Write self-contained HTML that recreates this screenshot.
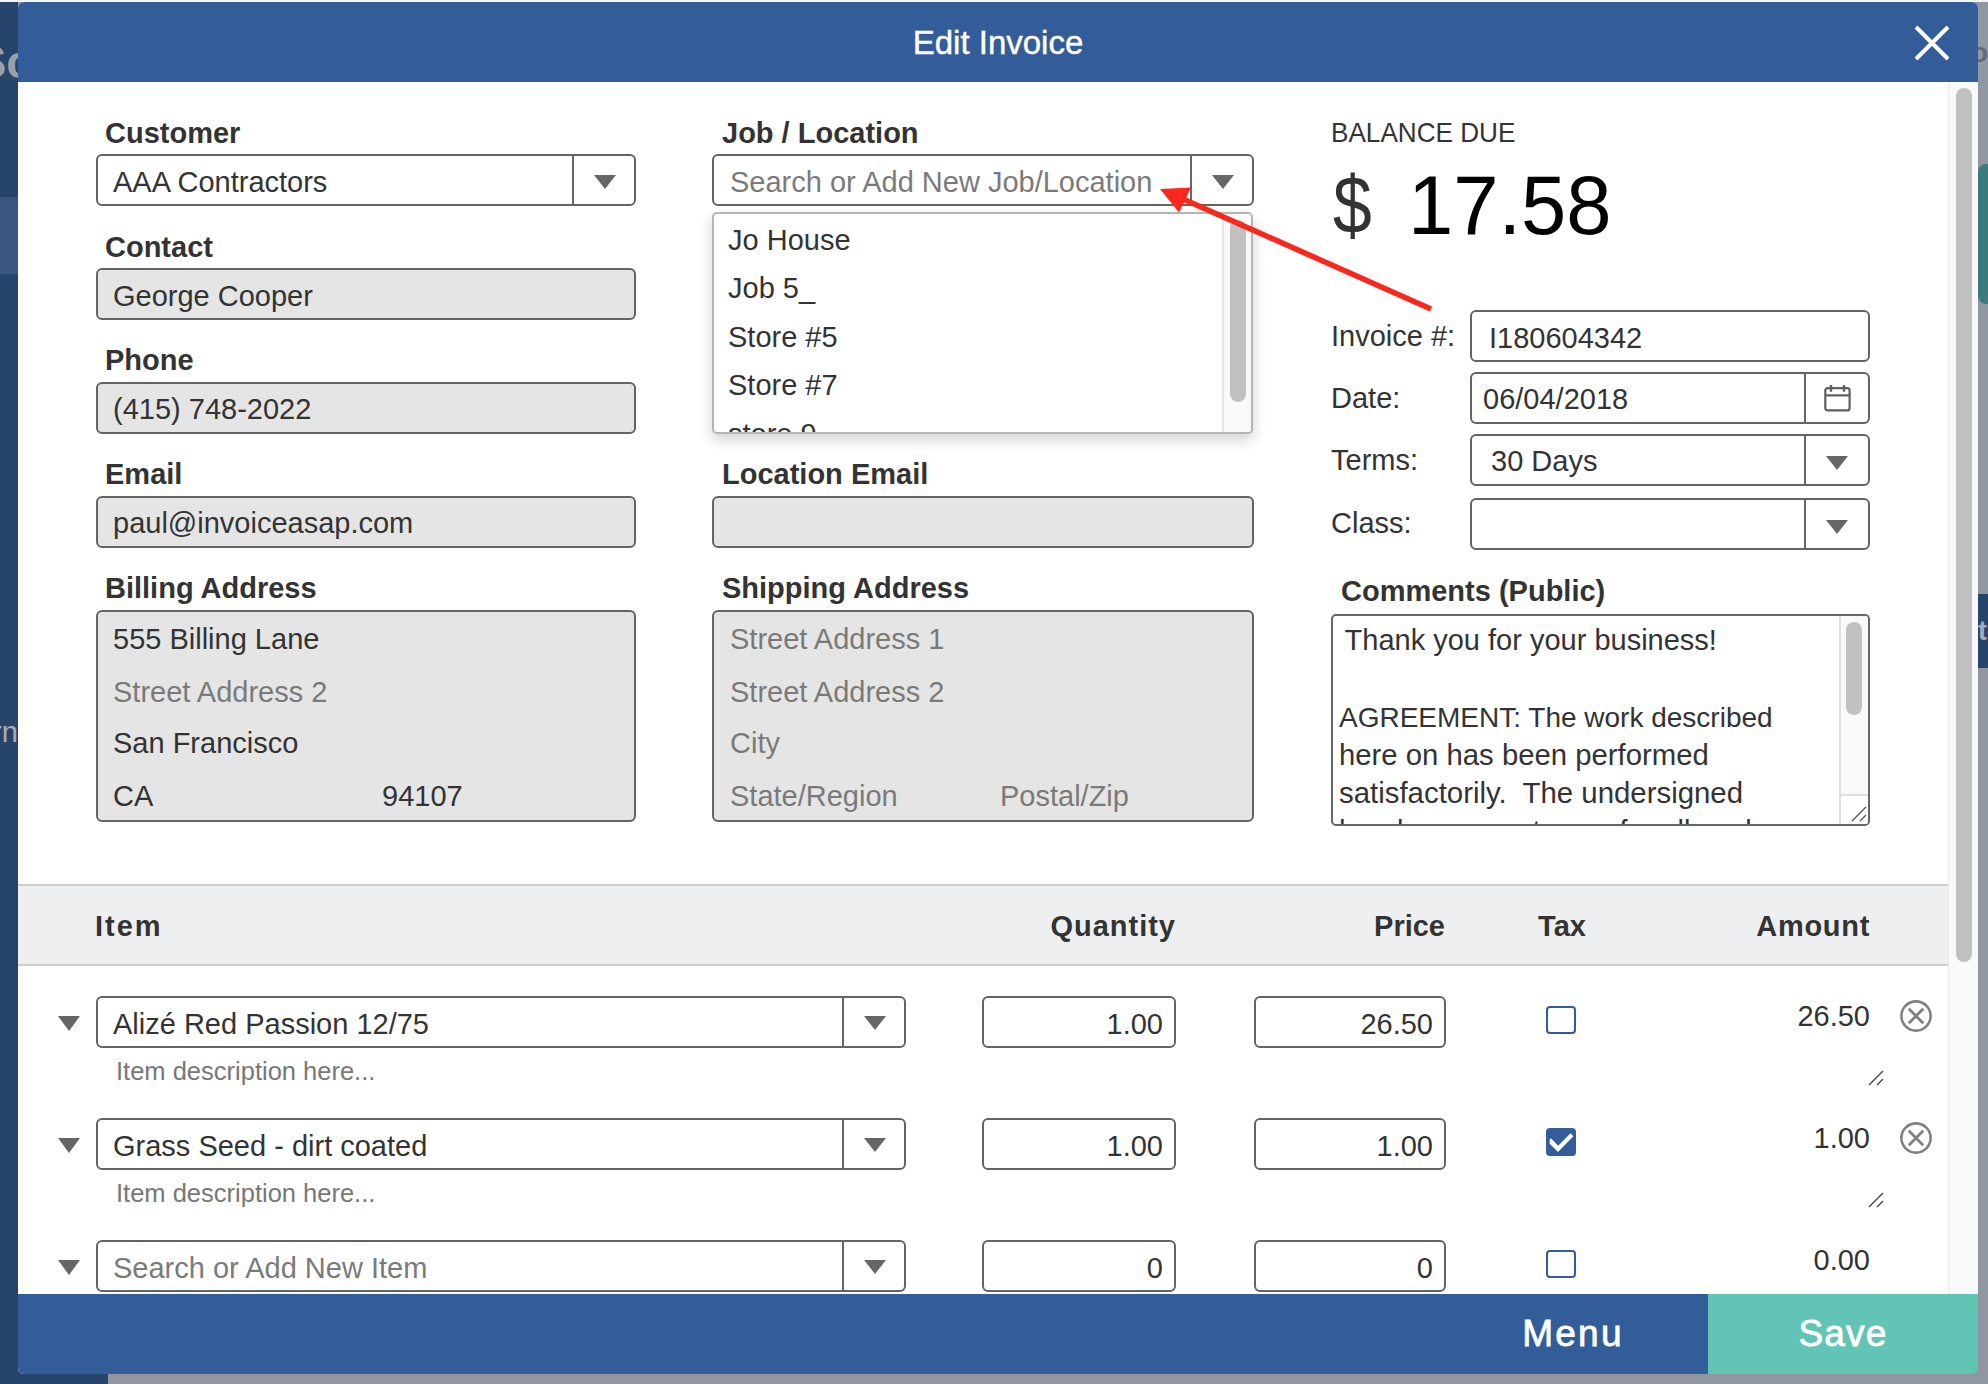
<!DOCTYPE html>
<html><head><meta charset="utf-8"><style>
html,body{margin:0;padding:0;width:1988px;height:1384px;overflow:hidden;position:relative;font-family:"Liberation Sans",sans-serif}
.t{position:absolute;white-space:pre;line-height:1}
.r{position:absolute}
</style></head><body>
<div class="r" style="left:0px;top:0px;width:1988px;height:1384px;background:#9097a0;"></div>
<div class="r" style="left:0px;top:0px;width:18px;height:1384px;background:#27446b;"></div>
<div class="r" style="left:0px;top:1370px;width:108px;height:14px;background:#27446b;"></div>
<div class="r" style="left:0px;top:197px;width:18px;height:77px;background:#3a5680;"></div>
<div class="r" style="left:0px;top:0px;width:1988px;height:2px;background:#f4f4f4;"></div>
<div class="t" style="top:38px;font-size:47px;color:#9aa0a8;font-weight:bold;left:-25px;">Sc</div>
<div class="t" style="top:718px;font-size:29px;color:#a9adb3;left:-8px;">rn</div>
<div class="r" style="left:1978px;top:164px;width:22px;height:140px;background:#3b7b7d;border-radius:8px;"></div>
<div class="r" style="left:1978px;top:594px;width:10px;height:74px;background:#27446b;"></div>
<div class="t" style="top:39px;font-size:28px;color:#666b73;font-weight:bold;left:1971px;">o</div>
<div class="t" style="top:618px;font-size:27px;color:#a9adb3;font-weight:bold;left:1978px;">te</div>
<div class="r" style="left:18px;top:2px;width:1960px;height:1372px;background:#fff;border-radius:6px;overflow:hidden">
<div class="r" style="left:0px;top:0px;width:1960px;height:80px;background:#335d99;"></div>
<div class="r" style="left:0px;top:1292px;width:1960px;height:80px;background:#335d99;"></div>
<div class="r" style="left:1690px;top:1292px;width:270px;height:80px;background:#61c4b4;"></div>
</div>
<div class="t" style="top:26px;font-size:33px;color:#fff;left:498px;width:1000px;text-align:center;-webkit-text-stroke:0.4px #fff;">Edit Invoice</div>
<svg class="r" style="left:1908px;top:19px" width="48" height="48" viewBox="0 0 48 48"><path d="M8 8 L40 40 M40 8 L8 40" stroke="#fff" stroke-width="4"/></svg>
<div class="r" style="left:1948px;top:82px;width:30px;height:1212px;background:#f9f9f9;border-left:1px solid #e6e6e6;box-sizing:border-box;"></div>
<div class="r" style="left:1956px;top:88px;width:16px;height:874px;background:#c1c1c1;border-radius:8px;"></div>
<div class="t" style="top:119px;font-size:29px;color:#333;font-weight:bold;left:105px;">Customer</div>
<div class="r" style="left:96px;top:154px;width:540px;height:52px;background:#fff;border:2px solid #646464;box-sizing:border-box;border-radius:6px;"></div>
<div class="r" style="left:572px;top:154px;width:2px;height:52px;background:#666;"></div>
<svg class="r" style="left:594.0px;top:175.0px" width="22" height="14" viewBox="0 0 22 14"><path d="M0 0 L22 0 L11.0 14 Z" fill="#666"/></svg>
<div class="t" style="top:168px;font-size:29px;color:#333;left:113px;">AAA Contractors</div>
<div class="t" style="top:233px;font-size:29px;color:#333;font-weight:bold;left:105px;">Contact</div>
<div class="r" style="left:96px;top:268px;width:540px;height:52px;background:#e5e5e5;border:2px solid #646464;box-sizing:border-box;border-radius:6px;"></div>
<div class="t" style="top:282px;font-size:29px;color:#333;left:113px;">George Cooper</div>
<div class="t" style="top:346px;font-size:29px;color:#333;font-weight:bold;left:105px;">Phone</div>
<div class="r" style="left:96px;top:382px;width:540px;height:52px;background:#e5e5e5;border:2px solid #646464;box-sizing:border-box;border-radius:6px;"></div>
<div class="t" style="top:395px;font-size:29px;color:#333;left:113px;">(415) 748-2022</div>
<div class="t" style="top:460px;font-size:29px;color:#333;font-weight:bold;left:105px;">Email</div>
<div class="r" style="left:96px;top:496px;width:540px;height:52px;background:#e5e5e5;border:2px solid #646464;box-sizing:border-box;border-radius:6px;"></div>
<div class="t" style="top:509px;font-size:29px;color:#333;left:113px;">paul@invoiceasap.com</div>
<div class="t" style="top:574px;font-size:29px;color:#333;font-weight:bold;left:105px;">Billing Address</div>
<div class="r" style="left:96px;top:610px;width:540px;height:212px;background:#e5e5e5;border:2px solid #646464;box-sizing:border-box;border-radius:6px;"></div>
<div class="t" style="top:625px;font-size:29px;color:#333;left:113px;">555 Billing Lane</div>
<div class="t" style="top:678px;font-size:29px;color:#7a7a7a;left:113px;">Street Address 2</div>
<div class="t" style="top:729px;font-size:29px;color:#333;left:113px;">San Francisco</div>
<div class="t" style="top:782px;font-size:29px;color:#333;left:113px;">CA</div>
<div class="t" style="top:782px;font-size:29px;color:#333;left:382px;">94107</div>
<div class="t" style="top:119px;font-size:29px;color:#333;font-weight:bold;left:722px;">Job / Location</div>
<div class="r" style="left:712px;top:154px;width:542px;height:52px;background:#fff;border:2px solid #646464;box-sizing:border-box;border-radius:6px;"></div>
<div class="r" style="left:1190px;top:154px;width:2px;height:52px;background:#666;"></div>
<svg class="r" style="left:1212.0px;top:175.0px" width="22" height="14" viewBox="0 0 22 14"><path d="M0 0 L22 0 L11.0 14 Z" fill="#666"/></svg>
<div class="t" style="top:168px;font-size:29px;color:#7a7a7a;left:730px;">Search or Add New Job/Location</div>
<div class="t" style="top:460px;font-size:29px;color:#333;font-weight:bold;left:722px;">Location Email</div>
<div class="r" style="left:712px;top:496px;width:542px;height:52px;background:#e5e5e5;border:2px solid #646464;box-sizing:border-box;border-radius:6px;"></div>
<div class="t" style="top:574px;font-size:29px;color:#333;font-weight:bold;left:722px;">Shipping Address</div>
<div class="r" style="left:712px;top:610px;width:542px;height:212px;background:#e5e5e5;border:2px solid #646464;box-sizing:border-box;border-radius:6px;"></div>
<div class="t" style="top:625px;font-size:29px;color:#7a7a7a;left:730px;">Street Address 1</div>
<div class="t" style="top:678px;font-size:29px;color:#7a7a7a;left:730px;">Street Address 2</div>
<div class="t" style="top:729px;font-size:29px;color:#7a7a7a;left:730px;">City</div>
<div class="t" style="top:782px;font-size:29px;color:#7a7a7a;left:730px;">State/Region</div>
<div class="t" style="top:782px;font-size:29px;color:#7a7a7a;left:1000px;">Postal/Zip</div>
<div class="r" style="left:712px;top:212px;width:541px;height:222px;background:#fff;border:2px solid #b5b5b5;box-sizing:border-box;border-radius:5px;box-shadow:0 6px 14px rgba(0,0,0,0.18);overflow:hidden">
<div class="t" style="left:14px;top:12px;font-size:29px;color:#333">Jo House</div>
<div class="t" style="left:14px;top:60px;font-size:29px;color:#333">Job 5_</div>
<div class="t" style="left:14px;top:109px;font-size:29px;color:#333">Store #5</div>
<div class="t" style="left:14px;top:157px;font-size:29px;color:#333">Store #7</div>
<div class="t" style="left:14px;top:206px;font-size:29px;color:#333">store 9</div>
<div class="t" style="left:14px;top:-36px;font-size:29px;color:#333">Jobs</div>
<div class="r" style="left:508px;top:0;width:31px;height:218px;background:#f9f9f9;border-left:2px solid #e6e6e6;box-sizing:border-box"></div>
<div class="r" style="left:516px;top:6px;width:16px;height:182px;background:#c1c1c1;border-radius:8px"></div>
</div>
<svg class="r" style="left:0;top:0;z-index:5" width="1988" height="1384" viewBox="0 0 1988 1384"><path d="M1431 309 L1183 199" stroke="#f9271c" stroke-width="5.5" stroke-linecap="butt"/><path d="M1160 189 L1191 187.5 L1179 212.5 Z" fill="#f9271c"/></svg>
<div class="t" style="top:119px;font-size:27.5px;color:#333;left:1331px;transform:scaleX(0.95);transform-origin:0 0;">BALANCE DUE</div>
<div class="t" style="top:164px;font-size:82px;color:#333;left:1333px;transform:scaleX(0.85);transform-origin:0 0;">$</div>
<div class="t" style="top:164px;font-size:83px;color:#000;left:1408px;transform:scaleX(0.98);transform-origin:0 0;">17.58</div>
<div class="t" style="top:322px;font-size:29px;color:#333;left:1331px;">Invoice #:</div>
<div class="t" style="top:384px;font-size:29px;color:#333;left:1331px;">Date:</div>
<div class="t" style="top:446px;font-size:29px;color:#333;left:1331px;">Terms:</div>
<div class="t" style="top:509px;font-size:29px;color:#333;left:1331px;">Class:</div>
<div class="r" style="left:1470px;top:310px;width:400px;height:52px;background:#fff;border:2px solid #646464;box-sizing:border-box;border-radius:6px;"></div>
<div class="t" style="top:324px;font-size:29px;color:#333;left:1489px;">I180604342</div>
<div class="r" style="left:1470px;top:372px;width:400px;height:52px;background:#fff;border:2px solid #646464;box-sizing:border-box;border-radius:6px;"></div>
<div class="r" style="left:1804px;top:372px;width:2px;height:52px;background:#666;"></div>
<div class="t" style="top:385px;font-size:29px;color:#333;left:1483px;">06/04/2018</div>
<svg class="r" style="left:1823px;top:384px" width="30" height="30" viewBox="0 0 30 30"><rect x="2.3" y="4.1" width="24.3" height="22.3" rx="2.5" fill="none" stroke="#606060" stroke-width="2.2"/><path d="M2 11.4 H27 M8 1 V7.7 M21 1 V7.7" stroke="#606060" stroke-width="2.4"/></svg>
<div class="r" style="left:1470px;top:434px;width:400px;height:52px;background:#fff;border:2px solid #646464;box-sizing:border-box;border-radius:6px;"></div>
<div class="r" style="left:1804px;top:434px;width:2px;height:52px;background:#666;"></div>
<svg class="r" style="left:1826.0px;top:456.0px" width="22" height="14" viewBox="0 0 22 14"><path d="M0 0 L22 0 L11.0 14 Z" fill="#666"/></svg>
<div class="t" style="top:447px;font-size:29px;color:#333;left:1491px;">30 Days</div>
<div class="r" style="left:1470px;top:498px;width:400px;height:52px;background:#fff;border:2px solid #646464;box-sizing:border-box;border-radius:6px;"></div>
<div class="r" style="left:1804px;top:498px;width:2px;height:52px;background:#666;"></div>
<svg class="r" style="left:1826.0px;top:520.0px" width="22" height="14" viewBox="0 0 22 14"><path d="M0 0 L22 0 L11.0 14 Z" fill="#666"/></svg>
<div class="t" style="top:577px;font-size:29px;color:#333;font-weight:bold;left:1341px;">Comments (Public)</div>
<div class="r" style="left:1331px;top:614px;width:539px;height:212px;background:#fff;border:2px solid #666;box-sizing:border-box;border-radius:5px;overflow:hidden">
<div class="t" style="left:4px;top:10px;font-size:29px;color:#333"> Thank you for your business!</div>
<div class="t" style="left:6px;top:88px;font-size:28px;color:#333">AGREEMENT: The work described</div>
<div class="t" style="left:6px;top:124px;font-size:29.3px;color:#333">here on has been performed</div>
<div class="t" style="left:6px;top:162px;font-size:29.4px;color:#333">satisfactorily.&nbsp; The undersigned</div>
<div class="t" style="left:6px;top:201px;font-size:29px;color:#333">hereby agrees to pay for all work</div>
<div class="r" style="left:506px;top:0;width:31px;height:208px;background:#f9f9f9;border-left:2px solid #e0e0e0;box-sizing:border-box"></div>
<div class="r" style="left:513px;top:6px;width:16px;height:93px;background:#c1c1c1;border-radius:8px"></div>
<div class="r" style="left:506px;top:178px;width:31px;height:30px;background:#fff;border-left:2px solid #e0e0e0;border-top:2px solid #e0e0e0;box-sizing:border-box"></div>
<svg class="r" style="left:517px;top:189px" width="18" height="18" viewBox="0 0 18 18"><path d="M2 16 L16 2 M10 16 L16 10" stroke="#555" stroke-width="1.4"/></svg>
</div>
<div class="r" style="left:18px;top:884px;width:1930px;height:82px;background:#eeeff1;border-top:2px solid #cfcfcf;border-bottom:2px solid #cfcfcf;box-sizing:border-box;"></div>
<div class="t" style="top:912px;font-size:29px;color:#333;font-weight:bold;left:95px;letter-spacing:2px;">Item</div>
<div class="t" style="top:912px;font-size:29px;color:#333;font-weight:bold;right:812px;text-align:right;letter-spacing:1px;">Quantity</div>
<div class="t" style="top:912px;font-size:29px;color:#333;font-weight:bold;right:543px;text-align:right;">Price</div>
<div class="t" style="top:912px;font-size:29px;color:#333;font-weight:bold;left:1062px;width:1000px;text-align:center;">Tax</div>
<div class="t" style="top:912px;font-size:29px;color:#333;font-weight:bold;right:118px;text-align:right;letter-spacing:0.7px;">Amount</div>
<svg class="r" style="left:58.0px;top:1015.5px" width="22" height="15" viewBox="0 0 22 15"><path d="M0 0 L22 0 L11.0 15 Z" fill="#666"/></svg>
<div class="r" style="left:96px;top:996px;width:810px;height:52px;background:#fff;border:2px solid #646464;box-sizing:border-box;border-radius:6px;"></div>
<div class="r" style="left:842px;top:996px;width:2px;height:52px;background:#666;"></div>
<svg class="r" style="left:864.0px;top:1016.0px" width="22" height="14" viewBox="0 0 22 14"><path d="M0 0 L22 0 L11.0 14 Z" fill="#666"/></svg>
<div class="t" style="top:1010px;font-size:29px;color:#333;left:113px;">Alizé Red Passion 12/75</div>
<div class="r" style="left:982px;top:996px;width:194px;height:52px;background:#fff;border:2px solid #646464;box-sizing:border-box;border-radius:6px;"></div>
<div class="t" style="top:1010px;font-size:29px;color:#333;right:825px;text-align:right;">1.00</div>
<div class="r" style="left:1254px;top:996px;width:192px;height:52px;background:#fff;border:2px solid #646464;box-sizing:border-box;border-radius:6px;"></div>
<div class="t" style="top:1010px;font-size:29px;color:#333;right:555px;text-align:right;">26.50</div>
<div class="r" style="left:1546px;top:1006px;width:30px;height:28px;background:#fff;border:2px solid #335d99;box-sizing:border-box;border-radius:4px;"></div>
<div class="t" style="top:1002px;font-size:29px;color:#333;right:118px;text-align:right;">26.50</div>
<svg class="r" style="left:1899px;top:999px" width="34" height="34" viewBox="0 0 34 34"><circle cx="17" cy="17" r="14.6" fill="none" stroke="#808080" stroke-width="2.6"/><path d="M9.8 9.8 L24.2 24.2 M24.2 9.8 L9.8 24.2" stroke="#808080" stroke-width="2.8"/></svg>
<div class="t" style="top:1059px;font-size:25.5px;color:#777;left:116px;">Item description here...</div>
<svg class="r" style="left:1868px;top:1070px" width="16" height="16" viewBox="0 0 16 16"><path d="M1 15 L15 1 M9 15 L15 9" stroke="#444" stroke-width="1.4"/></svg>
<svg class="r" style="left:58.0px;top:1137.5px" width="22" height="15" viewBox="0 0 22 15"><path d="M0 0 L22 0 L11.0 15 Z" fill="#666"/></svg>
<div class="r" style="left:96px;top:1118px;width:810px;height:52px;background:#fff;border:2px solid #646464;box-sizing:border-box;border-radius:6px;"></div>
<div class="r" style="left:842px;top:1118px;width:2px;height:52px;background:#666;"></div>
<svg class="r" style="left:864.0px;top:1138.0px" width="22" height="14" viewBox="0 0 22 14"><path d="M0 0 L22 0 L11.0 14 Z" fill="#666"/></svg>
<div class="t" style="top:1132px;font-size:29px;color:#333;left:113px;">Grass Seed - dirt coated</div>
<div class="r" style="left:982px;top:1118px;width:194px;height:52px;background:#fff;border:2px solid #646464;box-sizing:border-box;border-radius:6px;"></div>
<div class="t" style="top:1132px;font-size:29px;color:#333;right:825px;text-align:right;">1.00</div>
<div class="r" style="left:1254px;top:1118px;width:192px;height:52px;background:#fff;border:2px solid #646464;box-sizing:border-box;border-radius:6px;"></div>
<div class="t" style="top:1132px;font-size:29px;color:#333;right:555px;text-align:right;">1.00</div>
<svg class="r" style="left:1546px;top:1128px" width="30" height="28" viewBox="0 0 30 28"><rect x="0" y="0" width="30" height="28" rx="4" fill="#335d99"/><path d="M3.7 11.0 L5.2 10.6 L12.2 17.7 L24.5 5.3 L27.4 8.2 L12 24 L3.7 15.7 Z" fill="#fff"/></svg>
<div class="t" style="top:1124px;font-size:29px;color:#333;right:118px;text-align:right;">1.00</div>
<svg class="r" style="left:1899px;top:1121px" width="34" height="34" viewBox="0 0 34 34"><circle cx="17" cy="17" r="14.6" fill="none" stroke="#808080" stroke-width="2.6"/><path d="M9.8 9.8 L24.2 24.2 M24.2 9.8 L9.8 24.2" stroke="#808080" stroke-width="2.8"/></svg>
<div class="t" style="top:1181px;font-size:25.5px;color:#777;left:116px;">Item description here...</div>
<svg class="r" style="left:1868px;top:1192px" width="16" height="16" viewBox="0 0 16 16"><path d="M1 15 L15 1 M9 15 L15 9" stroke="#444" stroke-width="1.4"/></svg>
<svg class="r" style="left:58.0px;top:1259.5px" width="22" height="15" viewBox="0 0 22 15"><path d="M0 0 L22 0 L11.0 15 Z" fill="#666"/></svg>
<div class="r" style="left:96px;top:1240px;width:810px;height:52px;background:#fff;border:2px solid #646464;box-sizing:border-box;border-radius:6px;"></div>
<div class="r" style="left:842px;top:1240px;width:2px;height:52px;background:#666;"></div>
<svg class="r" style="left:864.0px;top:1260.0px" width="22" height="14" viewBox="0 0 22 14"><path d="M0 0 L22 0 L11.0 14 Z" fill="#666"/></svg>
<div class="t" style="top:1254px;font-size:29px;color:#7a7a7a;left:113px;">Search or Add New Item</div>
<div class="r" style="left:982px;top:1240px;width:194px;height:52px;background:#fff;border:2px solid #646464;box-sizing:border-box;border-radius:6px;"></div>
<div class="t" style="top:1254px;font-size:29px;color:#333;right:825px;text-align:right;">0</div>
<div class="r" style="left:1254px;top:1240px;width:192px;height:52px;background:#fff;border:2px solid #646464;box-sizing:border-box;border-radius:6px;"></div>
<div class="t" style="top:1254px;font-size:29px;color:#333;right:555px;text-align:right;">0</div>
<div class="r" style="left:1546px;top:1250px;width:30px;height:28px;background:#fff;border:2px solid #335d99;box-sizing:border-box;border-radius:4px;"></div>
<div class="t" style="top:1246px;font-size:29px;color:#333;right:118px;text-align:right;">0.00</div>
<div class="t" style="top:1315px;font-size:37px;color:#fff;left:1073px;width:1000px;text-align:center;letter-spacing:2.2px;-webkit-text-stroke:0.8px #fff;">Menu</div>
<div class="t" style="top:1315px;font-size:37px;color:#fff;left:1343px;width:1000px;text-align:center;letter-spacing:1.2px;-webkit-text-stroke:0.8px #fff;">Save</div>
</body></html>
